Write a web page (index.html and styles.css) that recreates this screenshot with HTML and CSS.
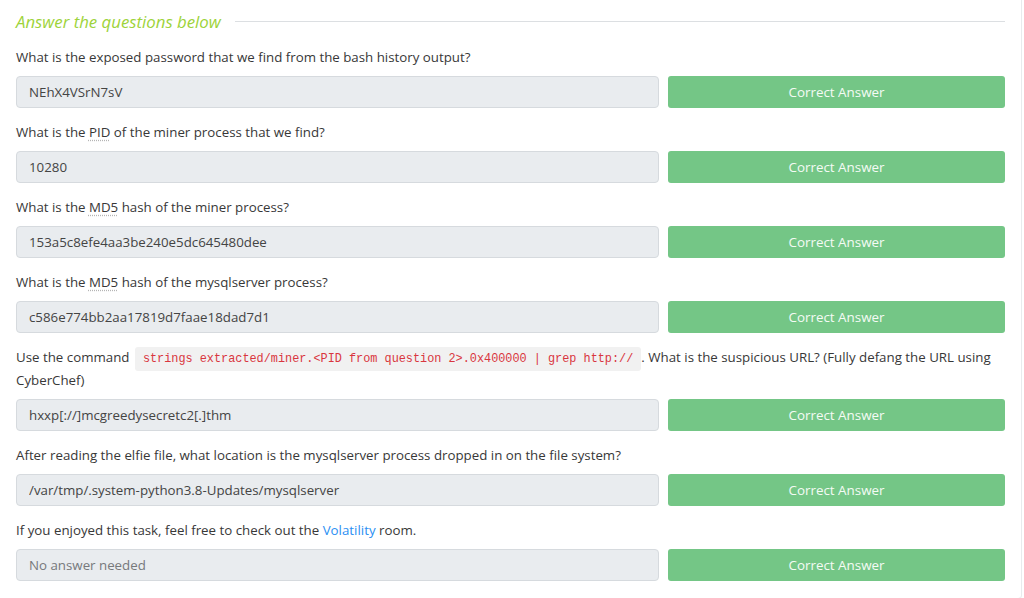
FILE: index.html
```html
<!DOCTYPE html>
<html lang="en">
  <head>
    <meta charset="UTF-8" />
    <meta name="viewport" content="width=device-width, initial-scale=1.0" />
    <title>Answer the questions below</title>
    <link rel="stylesheet" href="styles.css">
  </head>
  <body>
    <div class="card">
      <div class="card-head">
        <h4>Answer the questions below</h4>
        <span class="rule"></span>
      </div>

      <div class="question">
        <p>What is the exposed password that we find from the bash history output?</p>
        <div class="answer-row">
          <input class="answer" type="text" value="NEhX4VSrN7sV" readonly>
          <button class="btn-correct">Correct Answer</button>
        </div>
      </div>

      <div class="question">
        <p>What is the <abbr title="Process ID">PID</abbr> of the miner process that we find?</p>
        <div class="answer-row">
          <input class="answer" type="text" value="10280" readonly>
          <button class="btn-correct">Correct Answer</button>
        </div>
      </div>

      <div class="question">
        <p>What is the <abbr title="Message Digest 5">MD5</abbr> hash of the miner process?</p>
        <div class="answer-row">
          <input class="answer" type="text" value="153a5c8efe4aa3be240e5dc645480dee" readonly>
          <button class="btn-correct">Correct Answer</button>
        </div>
      </div>

      <div class="question">
        <p>What is the <abbr title="Message Digest 5">MD5</abbr> hash of the mysqlserver process?</p>
        <div class="answer-row">
          <input class="answer" type="text" value="c586e774bb2aa17819d7faae18dad7d1" readonly>
          <button class="btn-correct">Correct Answer</button>
        </div>
      </div>

      <div class="question">
        <p>Use the command <code>strings extracted/miner.&lt;PID from question 2&gt;.0x400000 | grep http://</code>. What is the suspicious URL? (Fully defang the URL using CyberChef)</p>
        <div class="answer-row">
          <input class="answer" type="text" value="hxxp[://]mcgreedysecretc2[.]thm" readonly>
          <button class="btn-correct">Correct Answer</button>
        </div>
      </div>

      <div class="question">
        <p>After reading the elfie file, what location is the mysqlserver process dropped in on the file system?</p>
        <div class="answer-row">
          <input class="answer" type="text" value="/var/tmp/.system-python3.8-Updates/mysqlserver" readonly>
          <button class="btn-correct">Correct Answer</button>
        </div>
      </div>

      <div class="question">
        <p>If you enjoyed this task, feel free to check out the <a href="#">Volatility</a> room.</p>
        <div class="answer-row">
          <input class="answer" type="text" placeholder="No answer needed" readonly>
          <button class="btn-correct">Correct Answer</button>
        </div>
      </div>
    </div>
  </body>
</html>
```

FILE: styles.css
```css
body {
  margin: 0;
  padding: 0;
  background: #fff;
  color: #383838;
  font-family: "Open Sans", "Noto Sans", sans-serif;
  font-size: 13.3px;
}
.card {
  width: 1022px;
  box-sizing: border-box;
  padding: 0 16px 4px 16px;
  border-bottom: 1px solid #dfe3e6;
  border-right: 1px solid #e8ebed;
  border-bottom-right-radius: 4px;
}
.card-head {
  display: flex;
  align-items: center;
  height: 42px;
  gap: 14px;
  margin-bottom: 4px;
}
.card-head h4 {
  margin: 0;
  font-size: 16.8px;
  font-style: italic;
  font-weight: 400;
  color: #9dd33a;
}
.card-head .rule {
  flex: 1;
  height: 1px;
  background: #dcdfe2;
}
.question {
  margin-bottom: 13px;
}
.question p {
  margin: 0 0 7px 0;
  line-height: 23px;
}
abbr {
  text-decoration: underline dotted #b5b5b5;
  text-underline-offset: 3px;
}
a {
  color: #2b8ff3;
  text-decoration: none;
}
code {
  font-family: "Liberation Mono", "DejaVu Sans Mono", monospace;
  font-size: 11.85px;
  line-height: 1;
  color: #d9363e;
  background: #f1f1f1;
  padding: 5px 8px;
  margin-left: 2px;
  border-radius: 3px;
}
.answer-row {
  display: grid;
  grid-template-columns: 1fr 337px;
  gap: 9px;
}
.answer {
  height: 32px;
  box-sizing: border-box;
  margin: 0;
  padding: 0 12px;
  border: 1px solid #d6dade;
  border-radius: 4px;
  background: #e9ecef;
  color: #444;
  font-family: inherit;
  font-size: 13.3px;
  outline: none;
}
.answer::placeholder {
  color: #77797c;
}
.btn-correct {
  height: 32px;
  margin: 0;
  border: none;
  border-radius: 3px;
  background: #74c686;
  color: #f4fbf5;
  font-family: inherit;
  font-size: 13.4px;
}
```
